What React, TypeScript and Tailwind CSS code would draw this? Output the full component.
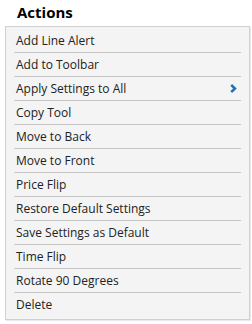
const items = [
  "Add Line Alert",
  "Add to Toolbar",
  "Apply Settings to All",
  "Copy Tool",
  "Move to Back",
  "Move to Front",
  "Price Flip",
  "Restore Default Settings",
  "Save Settings as Default",
  "Time Flip",
  "Rotate 90 Degrees",
  "Delete",
];

export default function App() {
  return (
    <div className="h-[324px] w-[252px] bg-white font-['Open_Sans',sans-serif]">
      <h2 className="h-[26px] pl-[17px] pt-[1px] text-[15px] font-bold leading-[22px] text-black">Actions</h2>
      <div className="ml-[5px] w-[245px] border border-[#d0d0d0] bg-[#f4f4f4] pb-[2px] pt-[2px] shadow-[1px_1px_1px_rgba(0,0,0,0.08)]">
        {items.map((label, i) => (
          <div
            key={label}
            className={
              "mx-[8px] flex h-[24px] items-center justify-between pl-[2px] pr-[4px] text-[12px] text-[#222] " +
              (i < items.length - 1 ? "border-b border-[#c8c8c8]" : "")
            }
          >
            <span>{label}</span>
            {label === "Apply Settings to All" && (
              <svg width="7" height="9" viewBox="0 0 7 9" className="text-[#1f6fb5]">
                <path d="M1.2 1 L5 4.5 L1.2 8" fill="none" stroke="currentColor" strokeWidth="2.4" strokeLinejoin="miter" />
              </svg>
            )}
          </div>
        ))}
      </div>
    </div>
  );
}
